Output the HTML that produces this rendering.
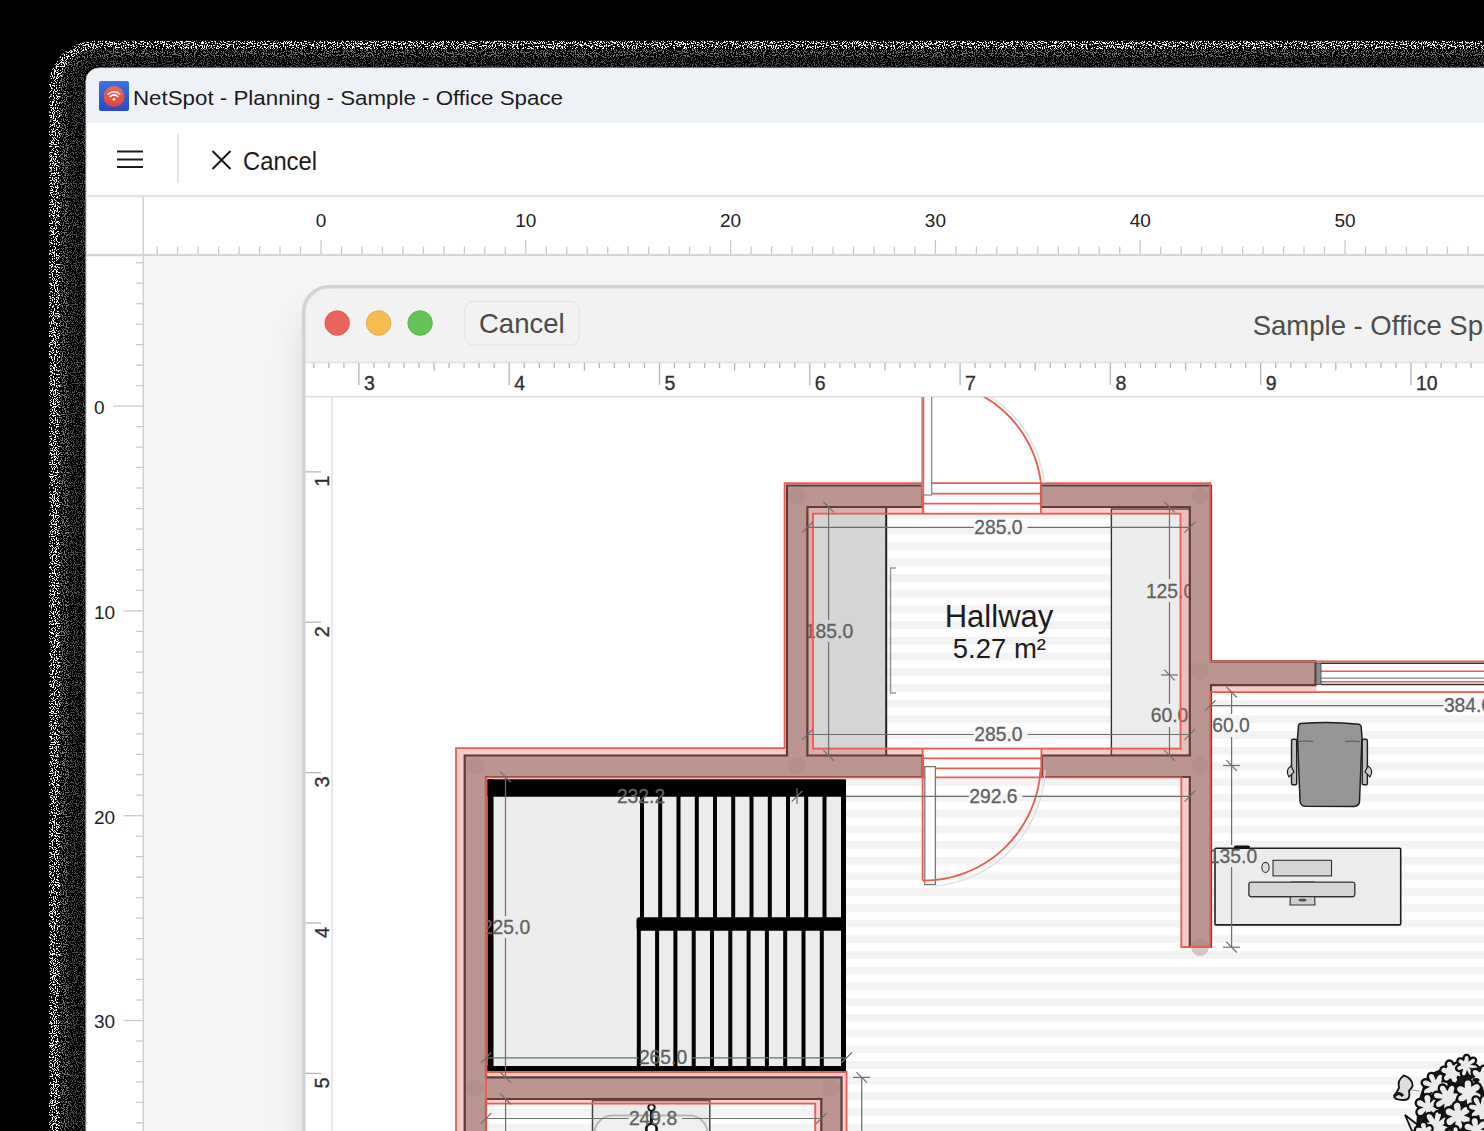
<!DOCTYPE html>
<html><head><meta charset="utf-8">
<style>
html,body{margin:0;padding:0;background:#000;width:1484px;height:1131px;overflow:hidden;}
svg{position:absolute;left:0;top:0;display:block;}
text{font-family:"Liberation Sans",sans-serif;}
</style></head><body>
<svg width="1484" height="1131" viewBox="0 0 1484 1131">
<defs>
<filter id="speck" x="0" y="0" width="1484" height="1131" filterUnits="userSpaceOnUse">
<feTurbulence type="fractalNoise" baseFrequency="0.9" numOctaves="1" seed="4" result="n"/>
<feColorMatrix in="n" type="matrix" values="0 0 0 0 1 0 0 0 0 1 0 0 0 0 1 30 0 0 0 -16" result="na"/>
<feComposite in="SourceGraphic" in2="na" operator="in"/>
</filter>
<filter id="blur2" x="-10%" y="-10%" width="120%" height="120%"><feGaussianBlur stdDeviation="1.5"/></filter>
<filter id="sh" x="-20%" y="-20%" width="140%" height="140%"><feGaussianBlur stdDeviation="22"/></filter>
<linearGradient id="icbg" x1="0" y1="0" x2="0" y2="1"><stop offset="0" stop-color="#3b74e0"/><stop offset="1" stop-color="#2a48c4"/></linearGradient>
<linearGradient id="icred" x1="0" y1="0" x2="0" y2="1"><stop offset="0" stop-color="#ec6a55"/><stop offset="1" stop-color="#d9473a"/></linearGradient>
<clipPath id="canvasclip"><rect x="144" y="255" width="1340" height="876"/></clipPath>
<clipPath id="innerclip"><path d="M329,285 H1490 V1140 H302 V312 A27,27 0 0 1 329,285 Z"/></clipPath>
<clipPath id="planclip"><rect x="333" y="397" width="1151" height="734"/></clipPath>
</defs>
<!-- noise shadow approx -->
<g filter="url(#speck)">
<rect x="49" y="40.7" width="1500" height="1200" rx="46" fill="#fff"/>
<rect x="60" y="49" width="1500" height="1200" rx="37" fill="#707070"/>
<rect x="69" y="57" width="1500" height="1200" rx="28" fill="#484848"/>
</g>
<!-- outer window -->
<rect x="86" y="68" width="1420" height="1100" rx="13" fill="#fff" stroke="#c6c6c6" stroke-width="1"/>
<path d="M99,68.5 H1490 V123 H86.5 V81 A12.5,12.5 0 0 1 99,68.5 Z" fill="#eef2f7"/>
<!-- app icon -->
<rect x="99" y="81" width="30" height="30" rx="2" fill="url(#icbg)"/>
<circle cx="114" cy="96.5" r="10.5" fill="url(#icred)"/>
<g fill="none" stroke="#fff" stroke-width="1.6" stroke-linecap="round">
<path d="M108.2,94.2 A8,8 0 0 1 119.8,94.2"/>
<path d="M110.3,96.5 A5,5 0 0 1 117.7,96.5"/>
</g>
<circle cx="114" cy="99.3" r="1.4" fill="#fff"/>
<text x="133" y="104.6" font-size="20.5" fill="#1b1b1b" textLength="430" lengthAdjust="spacingAndGlyphs">NetSpot - Planning - Sample - Office Space</text>
<!-- toolbar -->
<g stroke="#1b1b1b" stroke-width="2">
<line x1="117" y1="151.5" x2="143" y2="151.5"/>
<line x1="117" y1="159.5" x2="143" y2="159.5"/>
<line x1="117" y1="167" x2="143" y2="167"/>
</g>
<line x1="178" y1="134" x2="178" y2="183" stroke="#d4d4d4" stroke-width="1.2"/>
<g stroke="#1b1b1b" stroke-width="2"><line x1="212.5" y1="151" x2="230.5" y2="169"/><line x1="230.5" y1="151" x2="212.5" y2="169"/></g>
<text x="243" y="170" font-size="26" fill="#1b1b1b" textLength="74" lengthAdjust="spacingAndGlyphs">Cancel</text>
<rect x="86.5" y="195" width="1400" height="2.2" fill="#e3e3e3"/>
<!-- rulers -->
<rect x="142.6" y="197" width="1.4" height="940" fill="#d0d0d0"/>
<rect x="86.5" y="254.2" width="1400" height="2" fill="#d2d2d2"/>
<rect x="144" y="256.2" width="1340" height="876" fill="#f6f6f6"/>
<g stroke="#c9c9c9" stroke-width="1.3"><line x1="157.2" y1="246.5" x2="157.2" y2="254"/><line x1="177.6" y1="246.5" x2="177.6" y2="254"/><line x1="198.1" y1="246.5" x2="198.1" y2="254"/><line x1="218.6" y1="246.5" x2="218.6" y2="254"/><line x1="239.1" y1="246.5" x2="239.1" y2="254"/><line x1="259.6" y1="246.5" x2="259.6" y2="254"/><line x1="280.0" y1="246.5" x2="280.0" y2="254"/><line x1="300.5" y1="246.5" x2="300.5" y2="254"/><line x1="321.0" y1="240" x2="321.0" y2="254"/><line x1="341.5" y1="246.5" x2="341.5" y2="254"/><line x1="362.0" y1="246.5" x2="362.0" y2="254"/><line x1="382.4" y1="246.5" x2="382.4" y2="254"/><line x1="402.9" y1="246.5" x2="402.9" y2="254"/><line x1="423.4" y1="246.5" x2="423.4" y2="254"/><line x1="443.9" y1="246.5" x2="443.9" y2="254"/><line x1="464.4" y1="246.5" x2="464.4" y2="254"/><line x1="484.8" y1="246.5" x2="484.8" y2="254"/><line x1="505.3" y1="246.5" x2="505.3" y2="254"/><line x1="525.8" y1="240" x2="525.8" y2="254"/><line x1="546.3" y1="246.5" x2="546.3" y2="254"/><line x1="566.8" y1="246.5" x2="566.8" y2="254"/><line x1="587.2" y1="246.5" x2="587.2" y2="254"/><line x1="607.7" y1="246.5" x2="607.7" y2="254"/><line x1="628.2" y1="246.5" x2="628.2" y2="254"/><line x1="648.7" y1="246.5" x2="648.7" y2="254"/><line x1="669.2" y1="246.5" x2="669.2" y2="254"/><line x1="689.6" y1="246.5" x2="689.6" y2="254"/><line x1="710.1" y1="246.5" x2="710.1" y2="254"/><line x1="730.6" y1="240" x2="730.6" y2="254"/><line x1="751.1" y1="246.5" x2="751.1" y2="254"/><line x1="771.6" y1="246.5" x2="771.6" y2="254"/><line x1="792.0" y1="246.5" x2="792.0" y2="254"/><line x1="812.5" y1="246.5" x2="812.5" y2="254"/><line x1="833.0" y1="246.5" x2="833.0" y2="254"/><line x1="853.5" y1="246.5" x2="853.5" y2="254"/><line x1="874.0" y1="246.5" x2="874.0" y2="254"/><line x1="894.4" y1="246.5" x2="894.4" y2="254"/><line x1="914.9" y1="246.5" x2="914.9" y2="254"/><line x1="935.4" y1="240" x2="935.4" y2="254"/><line x1="955.9" y1="246.5" x2="955.9" y2="254"/><line x1="976.4" y1="246.5" x2="976.4" y2="254"/><line x1="996.8" y1="246.5" x2="996.8" y2="254"/><line x1="1017.3" y1="246.5" x2="1017.3" y2="254"/><line x1="1037.8" y1="246.5" x2="1037.8" y2="254"/><line x1="1058.3" y1="246.5" x2="1058.3" y2="254"/><line x1="1078.8" y1="246.5" x2="1078.8" y2="254"/><line x1="1099.2" y1="246.5" x2="1099.2" y2="254"/><line x1="1119.7" y1="246.5" x2="1119.7" y2="254"/><line x1="1140.2" y1="240" x2="1140.2" y2="254"/><line x1="1160.7" y1="246.5" x2="1160.7" y2="254"/><line x1="1181.2" y1="246.5" x2="1181.2" y2="254"/><line x1="1201.6" y1="246.5" x2="1201.6" y2="254"/><line x1="1222.1" y1="246.5" x2="1222.1" y2="254"/><line x1="1242.6" y1="246.5" x2="1242.6" y2="254"/><line x1="1263.1" y1="246.5" x2="1263.1" y2="254"/><line x1="1283.6" y1="246.5" x2="1283.6" y2="254"/><line x1="1304.0" y1="246.5" x2="1304.0" y2="254"/><line x1="1324.5" y1="246.5" x2="1324.5" y2="254"/><line x1="1345.0" y1="240" x2="1345.0" y2="254"/><line x1="1365.5" y1="246.5" x2="1365.5" y2="254"/><line x1="1386.0" y1="246.5" x2="1386.0" y2="254"/><line x1="1406.4" y1="246.5" x2="1406.4" y2="254"/><line x1="1426.9" y1="246.5" x2="1426.9" y2="254"/><line x1="1447.4" y1="246.5" x2="1447.4" y2="254"/><line x1="1467.9" y1="246.5" x2="1467.9" y2="254"/><line x1="1488.4" y1="246.5" x2="1488.4" y2="254"/><line x1="136" y1="262.7" x2="143" y2="262.7"/><line x1="136" y1="283.2" x2="143" y2="283.2"/><line x1="136" y1="303.7" x2="143" y2="303.7"/><line x1="136" y1="324.2" x2="143" y2="324.2"/><line x1="136" y1="344.7" x2="143" y2="344.7"/><line x1="136" y1="365.1" x2="143" y2="365.1"/><line x1="136" y1="385.6" x2="143" y2="385.6"/><line x1="113" y1="406.1" x2="143" y2="406.1"/><line x1="136" y1="426.6" x2="143" y2="426.6"/><line x1="136" y1="447.1" x2="143" y2="447.1"/><line x1="136" y1="467.5" x2="143" y2="467.5"/><line x1="136" y1="488.0" x2="143" y2="488.0"/><line x1="136" y1="508.5" x2="143" y2="508.5"/><line x1="136" y1="529.0" x2="143" y2="529.0"/><line x1="136" y1="549.5" x2="143" y2="549.5"/><line x1="136" y1="569.9" x2="143" y2="569.9"/><line x1="136" y1="590.4" x2="143" y2="590.4"/><line x1="123.5" y1="610.9" x2="143" y2="610.9"/><line x1="136" y1="631.4" x2="143" y2="631.4"/><line x1="136" y1="651.9" x2="143" y2="651.9"/><line x1="136" y1="672.3" x2="143" y2="672.3"/><line x1="136" y1="692.8" x2="143" y2="692.8"/><line x1="136" y1="713.3" x2="143" y2="713.3"/><line x1="136" y1="733.8" x2="143" y2="733.8"/><line x1="136" y1="754.3" x2="143" y2="754.3"/><line x1="136" y1="774.7" x2="143" y2="774.7"/><line x1="136" y1="795.2" x2="143" y2="795.2"/><line x1="123.5" y1="815.7" x2="143" y2="815.7"/><line x1="136" y1="836.2" x2="143" y2="836.2"/><line x1="136" y1="856.7" x2="143" y2="856.7"/><line x1="136" y1="877.1" x2="143" y2="877.1"/><line x1="136" y1="897.6" x2="143" y2="897.6"/><line x1="136" y1="918.1" x2="143" y2="918.1"/><line x1="136" y1="938.6" x2="143" y2="938.6"/><line x1="136" y1="959.1" x2="143" y2="959.1"/><line x1="136" y1="979.5" x2="143" y2="979.5"/><line x1="136" y1="1000.0" x2="143" y2="1000.0"/><line x1="123.5" y1="1020.5" x2="143" y2="1020.5"/><line x1="136" y1="1041.0" x2="143" y2="1041.0"/><line x1="136" y1="1061.5" x2="143" y2="1061.5"/><line x1="136" y1="1081.9" x2="143" y2="1081.9"/><line x1="136" y1="1102.4" x2="143" y2="1102.4"/><line x1="136" y1="1122.9" x2="143" y2="1122.9"/></g>
<g font-size="19" fill="#222"><text x="321.0" y="227.3" text-anchor="middle">0</text><text x="525.8" y="227.3" text-anchor="middle">10</text><text x="730.6" y="227.3" text-anchor="middle">20</text><text x="935.4" y="227.3" text-anchor="middle">30</text><text x="1140.2" y="227.3" text-anchor="middle">40</text><text x="1345.0" y="227.3" text-anchor="middle">50</text><text x="1549.8" y="227.3" text-anchor="middle">60</text><text x="94" y="413.9">0</text><text x="94" y="618.7">10</text><text x="94" y="823.5">20</text><text x="94" y="1028.3">30</text><text x="94" y="1233.1">40</text></g>
<!-- inner window shadow -->
<g clip-path="url(#canvasclip)">
<rect x="300" y="310" width="1300" height="1000" rx="26" fill="#000" opacity="0.09" filter="url(#sh)"/>
</g>
<!-- inner window -->
<path d="M329,285 H1490 V1140 H302 V312 A27,27 0 0 1 329,285 Z" fill="#f2f2f2"/>
<g clip-path="url(#innerclip)">
<rect x="300" y="362" width="1200" height="800" fill="#fff"/>
<rect x="300" y="396" width="1200" height="1.5" fill="#e0e0e0"/>
<rect x="300" y="361.6" width="1200" height="1.8" fill="#e4e4e4"/>
<rect x="331.2" y="397" width="1.6" height="760" fill="#e3e3e3"/>
<g stroke="#b5b5b5" stroke-width="1.3"><line x1="313.8" y1="363" x2="313.8" y2="368"/><line x1="328.8" y1="363" x2="328.8" y2="368"/><line x1="343.9" y1="363" x2="343.9" y2="368"/><line x1="358.9" y1="363" x2="358.9" y2="385"/><line x1="373.9" y1="363" x2="373.9" y2="368"/><line x1="389.0" y1="363" x2="389.0" y2="368"/><line x1="404.0" y1="363" x2="404.0" y2="368"/><line x1="419.0" y1="363" x2="419.0" y2="368"/><line x1="434.0" y1="363" x2="434.0" y2="370.5"/><line x1="449.1" y1="363" x2="449.1" y2="368"/><line x1="464.1" y1="363" x2="464.1" y2="368"/><line x1="479.1" y1="363" x2="479.1" y2="368"/><line x1="494.2" y1="363" x2="494.2" y2="368"/><line x1="509.2" y1="363" x2="509.2" y2="385"/><line x1="524.2" y1="363" x2="524.2" y2="368"/><line x1="539.3" y1="363" x2="539.3" y2="368"/><line x1="554.3" y1="363" x2="554.3" y2="368"/><line x1="569.3" y1="363" x2="569.3" y2="368"/><line x1="584.4" y1="363" x2="584.4" y2="370.5"/><line x1="599.4" y1="363" x2="599.4" y2="368"/><line x1="614.4" y1="363" x2="614.4" y2="368"/><line x1="629.4" y1="363" x2="629.4" y2="368"/><line x1="644.5" y1="363" x2="644.5" y2="368"/><line x1="659.5" y1="363" x2="659.5" y2="385"/><line x1="674.5" y1="363" x2="674.5" y2="368"/><line x1="689.6" y1="363" x2="689.6" y2="368"/><line x1="704.6" y1="363" x2="704.6" y2="368"/><line x1="719.6" y1="363" x2="719.6" y2="368"/><line x1="734.6" y1="363" x2="734.6" y2="370.5"/><line x1="749.7" y1="363" x2="749.7" y2="368"/><line x1="764.7" y1="363" x2="764.7" y2="368"/><line x1="779.7" y1="363" x2="779.7" y2="368"/><line x1="794.8" y1="363" x2="794.8" y2="368"/><line x1="809.8" y1="363" x2="809.8" y2="385"/><line x1="824.8" y1="363" x2="824.8" y2="368"/><line x1="839.9" y1="363" x2="839.9" y2="368"/><line x1="854.9" y1="363" x2="854.9" y2="368"/><line x1="869.9" y1="363" x2="869.9" y2="368"/><line x1="885.0" y1="363" x2="885.0" y2="370.5"/><line x1="900.0" y1="363" x2="900.0" y2="368"/><line x1="915.0" y1="363" x2="915.0" y2="368"/><line x1="930.0" y1="363" x2="930.0" y2="368"/><line x1="945.1" y1="363" x2="945.1" y2="368"/><line x1="960.1" y1="363" x2="960.1" y2="385"/><line x1="975.1" y1="363" x2="975.1" y2="368"/><line x1="990.2" y1="363" x2="990.2" y2="368"/><line x1="1005.2" y1="363" x2="1005.2" y2="368"/><line x1="1020.2" y1="363" x2="1020.2" y2="368"/><line x1="1035.2" y1="363" x2="1035.2" y2="370.5"/><line x1="1050.3" y1="363" x2="1050.3" y2="368"/><line x1="1065.3" y1="363" x2="1065.3" y2="368"/><line x1="1080.3" y1="363" x2="1080.3" y2="368"/><line x1="1095.4" y1="363" x2="1095.4" y2="368"/><line x1="1110.4" y1="363" x2="1110.4" y2="385"/><line x1="1125.4" y1="363" x2="1125.4" y2="368"/><line x1="1140.5" y1="363" x2="1140.5" y2="368"/><line x1="1155.5" y1="363" x2="1155.5" y2="368"/><line x1="1170.5" y1="363" x2="1170.5" y2="368"/><line x1="1185.6" y1="363" x2="1185.6" y2="370.5"/><line x1="1200.6" y1="363" x2="1200.6" y2="368"/><line x1="1215.6" y1="363" x2="1215.6" y2="368"/><line x1="1230.6" y1="363" x2="1230.6" y2="368"/><line x1="1245.7" y1="363" x2="1245.7" y2="368"/><line x1="1260.7" y1="363" x2="1260.7" y2="385"/><line x1="1275.7" y1="363" x2="1275.7" y2="368"/><line x1="1290.8" y1="363" x2="1290.8" y2="368"/><line x1="1305.8" y1="363" x2="1305.8" y2="368"/><line x1="1320.8" y1="363" x2="1320.8" y2="368"/><line x1="1335.8" y1="363" x2="1335.8" y2="370.5"/><line x1="1350.9" y1="363" x2="1350.9" y2="368"/><line x1="1365.9" y1="363" x2="1365.9" y2="368"/><line x1="1380.9" y1="363" x2="1380.9" y2="368"/><line x1="1396.0" y1="363" x2="1396.0" y2="368"/><line x1="1411.0" y1="363" x2="1411.0" y2="385"/><line x1="1426.0" y1="363" x2="1426.0" y2="368"/><line x1="1441.1" y1="363" x2="1441.1" y2="368"/><line x1="1456.1" y1="363" x2="1456.1" y2="368"/><line x1="1471.1" y1="363" x2="1471.1" y2="368"/><line x1="1486.2" y1="363" x2="1486.2" y2="370.5"/><line x1="305" y1="471.8" x2="321" y2="471.8"/><line x1="305" y1="622.2" x2="321" y2="622.2"/><line x1="305" y1="772.6" x2="321" y2="772.6"/><line x1="305" y1="923.0" x2="321" y2="923.0"/><line x1="305" y1="1073.4" x2="321" y2="1073.4"/></g>
<g font-size="19.5" fill="#2e2e2e" stroke="#2e2e2e" stroke-width="0.3"><text x="363.9" y="389.5">3</text><text x="514.2" y="389.5">4</text><text x="664.5" y="389.5">5</text><text x="814.8" y="389.5">6</text><text x="965.1" y="389.5">7</text><text x="1115.4" y="389.5">8</text><text x="1265.7" y="389.5">9</text><text x="1416.0" y="389.5">10</text><text x="1566.3" y="389.5">11</text><text transform="translate(328.6,486.8) rotate(-90)" x="0" y="0" font-size="20">1</text><text transform="translate(328.6,637.2) rotate(-90)" x="0" y="0" font-size="20">2</text><text transform="translate(328.6,787.6) rotate(-90)" x="0" y="0" font-size="20">3</text><text transform="translate(328.6,938.0) rotate(-90)" x="0" y="0" font-size="20">4</text><text transform="translate(328.6,1088.4) rotate(-90)" x="0" y="0" font-size="20">5</text></g>
</g>
<path d="M1490,286.75 H329 A25.25,25.25 0 0 0 303.75,312 V1140" fill="none" stroke="#d3d3d3" stroke-width="3.7"/>
<!-- traffic lights -->
<circle cx="337.2" cy="323" r="12.3" fill="#ec6559" stroke="#d5493f" stroke-width="0.7"/>
<circle cx="378.6" cy="323" r="12.3" fill="#f4bd4f" stroke="#d8a13a" stroke-width="0.7"/>
<circle cx="420.1" cy="323" r="12.3" fill="#61c454" stroke="#4fa83f" stroke-width="0.7"/>
<rect x="464.8" y="301.3" width="114.3" height="43.5" rx="8" fill="#f2f2f2" stroke="#e1e1e1" stroke-width="1"/>
<text x="521.8" y="332.5" font-size="27.5" fill="#4a4a4a" text-anchor="middle">Cancel</text>
<text x="1252.7" y="334.9" font-size="27.5" fill="#4d4d4d">Sample - Office Space</text>
<g clip-path="url(#planclip)">
<defs><pattern id="stripes" patternUnits="userSpaceOnUse" x="0" y="8.46" width="40" height="15.71">
<rect x="0" y="0" width="40" height="15.71" fill="#fff"/><rect x="0" y="0" width="40" height="7.7" fill="#f3f3f3"/></pattern>
<pattern id="stripes2" patternUnits="userSpaceOnUse" x="0" y="8.46" width="40" height="15.71">
<rect x="0" y="0" width="40" height="15.71" fill="#fff"/><rect x="0" y="0" width="40" height="7.7" fill="#f0f0f0"/></pattern>
</defs>
<path d="M813,513.7 H1180.5 V748.6 H813 Z" fill="url(#stripes)"/>
<path d="M486,777 H1181.3 V947 H1210.2 V692.2 H1490 V1140 H846.6 V1072 H486 Z" fill="url(#stripes)"/>
<path d="M486,1103.7 H815.2 V1140 H486 Z" fill="url(#stripes)"/>
<rect x="922.6" y="483.2" width="118.4" height="30.5" fill="#fff"/>
<rect x="922.6" y="748.8" width="118.8" height="28.2" fill="#fff"/>
<rect x="807.4" y="507" width="78.8" height="248.5" fill="#d5d5d5"/>
<rect x="1111.4" y="509" width="78.4" height="246.5" fill="#ececec" stroke="#333" stroke-width="1.4"/>
<line x1="886.2" y1="507" x2="886.2" y2="755.5" stroke="#222" stroke-width="2"/>
<path d="M896,568 H890.5 V693 H896" fill="none" stroke="#999" stroke-width="1.5"/>
<rect x="486" y="777" width="360" height="295" fill="#ececec"/>
<rect x="592.5" y="1100.6" width="117.3" height="40" fill="#ebebeb" stroke="#444" stroke-width="1.5"/>
<rect x="594.5" y="1115.5" width="113" height="40" rx="18" fill="#efefef" stroke="#b5b5b5" stroke-width="1.8"/>
<g fill="#000"><rect x="487.5" y="779.3" width="358.5" height="17.5" rx="1"/><rect x="636.5" y="917.3" width="209.5" height="13.5" rx="3"/><rect x="487.5" y="1066" width="358.5" height="5.5"/><rect x="487.5" y="779.3" width="6" height="292"/><rect x="841" y="781" width="5" height="290"/><rect x="640.0" y="795" width="4" height="124"/><rect x="636.8" y="929" width="4" height="139"/><rect x="658.2" y="795" width="4" height="124"/><rect x="655.1" y="929" width="4" height="139"/><rect x="676.5" y="795" width="4" height="124"/><rect x="673.4" y="929" width="4" height="139"/><rect x="694.8" y="795" width="4" height="124"/><rect x="691.7" y="929" width="4" height="139"/><rect x="713.0" y="795" width="4" height="124"/><rect x="710.0" y="929" width="4" height="139"/><rect x="731.2" y="795" width="4" height="124"/><rect x="728.3" y="929" width="4" height="139"/><rect x="749.5" y="795" width="4" height="124"/><rect x="746.6" y="929" width="4" height="139"/><rect x="767.8" y="795" width="4" height="124"/><rect x="764.9" y="929" width="4" height="139"/><rect x="786.0" y="795" width="4" height="124"/><rect x="783.2" y="929" width="4" height="139"/><rect x="804.2" y="795" width="4" height="124"/><rect x="801.5" y="929" width="4" height="139"/><rect x="822.5" y="795" width="4" height="124"/><rect x="819.8" y="929" width="4" height="139"/></g>
<g fill="#fff" stroke="#111" stroke-width="2"><circle cx="651.5" cy="1107.5" r="3.2"/><line x1="651.5" y1="1111" x2="651.5" y2="1123" stroke-width="3"/><circle cx="651.5" cy="1129" r="5.2" stroke-width="2.6"/></g>
<rect x="1215" y="848.3" width="185.7" height="76.6" fill="#ececec" stroke="#1e1e1e" stroke-width="1.6" rx="1"/>
<rect x="1234" y="845.5" width="16" height="3.2" rx="1.5" fill="#111"/>
<rect x="1273" y="860.3" width="58.5" height="15.6" fill="#d6d6d6" stroke="#333" stroke-width="1.1"/>
<rect x="1249" y="882.3" width="105.7" height="14.3" rx="2" fill="#d6d6d6" stroke="#333" stroke-width="1.1"/>
<path d="M1291,882 H1314 L1315,905 H1290 Z" fill="#d0d0d0" stroke="#333" stroke-width="1.1"/>
<rect x="1249" y="882.3" width="105.7" height="14.3" rx="2" fill="#d6d6d6" stroke="#333" stroke-width="1.1"/>
<ellipse cx="1302.5" cy="900" rx="4" ry="1.5" fill="#555"/>
<ellipse cx="1265.5" cy="867.4" rx="3.6" ry="5" fill="#ddd" stroke="#333" stroke-width="1.1"/>
<path d="M1298.5,726 Q1298.5,723.8 1301,723.5 Q1330,721 1359,724.2 Q1361,724.6 1361.2,727 L1362,738 L1359.5,802 Q1358.8,806 1354,806.5 L1305,806.3 Q1300.5,806 1300,801 L1297.5,738 Z" fill="#969696" stroke="#1e1e1e" stroke-width="1.5"/>
<rect x="1291.5" y="739.2" width="5.2" height="45.5" rx="1.5" fill="#bdbdbd" stroke="#1e1e1e" stroke-width="1.4"/>
<rect x="1362.2" y="739.2" width="5.2" height="45.5" rx="1.5" fill="#bdbdbd" stroke="#1e1e1e" stroke-width="1.4"/>
<path d="M1298,741.5 Q1306,740.5 1313,741.5 M1345,741.5 Q1352,740.5 1360,741.5" fill="none" stroke="#555" stroke-width="1"/>
<path d="M1291,766 Q1285,770 1289,777 L1294,772 Z M1368,766 Q1374,770 1370,777 L1365,772 Z" fill="#cfcfcf" stroke="#1e1e1e" stroke-width="1.1"/>
<path d="M1403.8,1075.4 Q1413,1079 1412.6,1086 Q1411,1089 1409,1091 Q1411,1100 1404,1100 Q1394,1100 1394,1096 Q1397,1092 1399,1088 Q1397,1080 1403.8,1075.4 Z" fill="#dedede" stroke="#111" stroke-width="1.8"/>
<path d="M1394.5,1096 Q1399,1091 1403,1096" fill="none" stroke="#111" stroke-width="3"/>
<line x1="1412" y1="1090" x2="1420" y2="1091" stroke="#999" stroke-width="1"/>
<path d="M1405,1115 L1418,1125 L1420,1131 L1412,1131 Z" fill="#e5e5e5" stroke="#111" stroke-width="1.8"/>
<path d="M1416,1140 L1419,1102 L1425,1084 L1434,1073 L1455.6,1064 L1465.3,1057.5 L1473.5,1066.5 L1490,1068 V1140 Z" fill="#1a1a1a" stroke="#111" stroke-width="2"/>
<path d="M1448.5,1086.0 L1447.9,1086.9 L1447.0,1087.7 L1445.8,1088.3 L1444.1,1088.6 L1443.8,1089.2 L1445.0,1090.5 L1445.6,1091.7 L1445.9,1092.8 L1445.9,1093.9 L1445.5,1094.8 L1445.0,1095.6 L1444.2,1096.2 L1443.2,1096.6 L1442.2,1096.6 L1441.0,1096.4 L1439.8,1095.8 L1438.4,1094.5 L1438.0,1095.1 L1437.7,1096.8 L1437.1,1098.0 L1436.4,1098.9 L1435.5,1099.5 L1434.5,1099.8 L1433.6,1099.8 L1432.6,1099.5 L1431.8,1098.9 L1431.1,1098.1 L1430.6,1097.0 L1430.3,1095.6 L1430.6,1093.6 L1429.5,1094.2 L1428.0,1094.9 L1426.8,1095.2 L1425.6,1095.1 L1424.6,1094.7 L1423.8,1094.1 L1423.3,1093.3 L1422.9,1092.4 L1422.9,1091.4 L1423.2,1090.3 L1423.8,1089.2 L1424.8,1088.2 L1426.8,1087.2 L1424.9,1086.7 L1423.5,1086.0 L1422.6,1085.1 L1422.0,1084.2 L1421.7,1083.2 L1421.7,1082.2 L1422.0,1081.3 L1422.6,1080.5 L1423.4,1079.8 L1424.4,1079.4 L1425.7,1079.2 L1427.2,1079.4 L1429.2,1080.4 L1428.1,1078.3 L1427.8,1076.8 L1428.0,1075.6 L1428.4,1074.6 L1429.0,1073.7 L1429.8,1073.2 L1430.7,1072.9 L1431.7,1072.8 L1432.7,1073.1 L1433.7,1073.7 L1434.6,1074.6 L1435.3,1076.0 L1435.9,1077.5 L1436.8,1075.6 L1437.8,1074.6 L1438.9,1074.0 L1440.0,1073.7 L1441.0,1073.7 L1441.9,1074.0 L1442.7,1074.6 L1443.3,1075.3 L1443.7,1076.3 L1443.8,1077.5 L1443.6,1078.8 L1442.9,1080.3 L1442.6,1081.2 L1444.5,1080.9 L1445.9,1081.2 L1447.0,1081.6 L1447.8,1082.3 L1448.4,1083.1 L1448.7,1084.1 L1448.7,1085.0 Z" fill="#ebebeb" stroke="#111" stroke-width="2.3"/>
<path d="M1463.3,1072.0 L1463.6,1072.8 L1463.7,1073.6 L1463.6,1074.5 L1463.3,1075.3 L1462.9,1076.0 L1462.3,1076.6 L1461.5,1077.0 L1460.5,1077.3 L1459.4,1077.4 L1458.0,1077.1 L1457.7,1077.5 L1458.2,1078.8 L1458.2,1079.9 L1458.0,1080.9 L1457.6,1081.7 L1457.1,1082.4 L1456.4,1083.0 L1455.7,1083.3 L1454.9,1083.5 L1454.0,1083.4 L1453.2,1083.2 L1452.4,1082.7 L1451.6,1082.0 L1451.0,1081.1 L1450.6,1079.8 L1450.1,1079.7 L1449.2,1080.7 L1448.2,1081.3 L1447.3,1081.7 L1446.4,1081.7 L1445.5,1081.6 L1444.7,1081.3 L1444.1,1080.8 L1443.5,1080.2 L1443.1,1079.5 L1442.9,1078.6 L1442.9,1077.7 L1443.1,1076.7 L1443.6,1075.7 L1444.6,1074.7 L1444.4,1074.2 L1443.0,1073.9 L1442.0,1073.4 L1441.3,1072.7 L1440.7,1072.0 L1440.4,1071.2 L1440.3,1070.4 L1440.4,1069.5 L1440.7,1068.7 L1441.1,1068.0 L1441.7,1067.4 L1442.5,1067.0 L1443.5,1066.7 L1444.6,1066.6 L1446.0,1066.9 L1446.3,1066.5 L1445.8,1065.2 L1445.8,1064.1 L1446.0,1063.1 L1446.4,1062.3 L1446.9,1061.6 L1447.6,1061.0 L1448.3,1060.7 L1449.1,1060.5 L1450.0,1060.6 L1450.8,1060.8 L1451.6,1061.3 L1452.4,1062.0 L1453.0,1062.9 L1453.4,1064.2 L1453.9,1064.3 L1454.8,1063.3 L1455.8,1062.7 L1456.7,1062.3 L1457.6,1062.3 L1458.5,1062.4 L1459.3,1062.7 L1459.9,1063.2 L1460.5,1063.8 L1460.9,1064.5 L1461.1,1065.4 L1461.1,1066.3 L1460.9,1067.3 L1460.4,1068.3 L1459.4,1069.3 L1459.6,1069.8 L1461.0,1070.1 L1462.0,1070.6 L1462.7,1071.3 Z" fill="#ebebeb" stroke="#111" stroke-width="2.3"/>
<path d="M1477.6,1066.0 L1478.0,1066.8 L1478.1,1067.6 L1478.0,1068.3 L1477.6,1069.0 L1477.0,1069.7 L1476.3,1070.1 L1475.3,1070.4 L1474.0,1070.4 L1472.1,1069.7 L1473.4,1071.4 L1473.8,1072.5 L1473.8,1073.5 L1473.6,1074.4 L1473.2,1075.2 L1472.6,1075.7 L1471.9,1076.1 L1471.1,1076.2 L1470.3,1076.1 L1469.4,1075.7 L1468.6,1075.1 L1467.8,1074.1 L1467.2,1072.9 L1466.7,1074.5 L1466.0,1075.5 L1465.2,1076.1 L1464.4,1076.4 L1463.6,1076.5 L1462.8,1076.4 L1462.1,1076.0 L1461.5,1075.5 L1461.1,1074.7 L1460.9,1073.8 L1460.9,1072.8 L1461.3,1071.5 L1461.5,1070.6 L1460.0,1071.1 L1458.8,1071.1 L1457.9,1070.8 L1457.1,1070.4 L1456.6,1069.8 L1456.2,1069.1 L1456.1,1068.3 L1456.2,1067.5 L1456.6,1066.7 L1457.2,1066.0 L1458.1,1065.4 L1459.4,1064.9 L1459.7,1064.4 L1458.5,1063.6 L1457.8,1062.7 L1457.5,1061.8 L1457.4,1060.9 L1457.6,1060.1 L1457.9,1059.4 L1458.5,1058.8 L1459.2,1058.5 L1460.0,1058.3 L1461.0,1058.3 L1462.1,1058.7 L1463.3,1059.6 L1463.6,1059.0 L1463.6,1057.7 L1464.0,1056.6 L1464.5,1055.8 L1465.1,1055.3 L1465.8,1054.9 L1466.6,1054.8 L1467.4,1054.9 L1468.1,1055.3 L1468.8,1055.9 L1469.3,1056.7 L1469.7,1057.8 L1469.7,1059.4 L1470.5,1058.8 L1471.6,1058.1 L1472.6,1057.7 L1473.5,1057.7 L1474.3,1057.9 L1475.0,1058.2 L1475.6,1058.8 L1476.0,1059.5 L1476.1,1060.3 L1476.0,1061.2 L1475.7,1062.1 L1475.0,1063.1 L1473.5,1064.1 L1475.0,1064.3 L1476.2,1064.7 L1477.0,1065.3 Z" fill="#ebebeb" stroke="#111" stroke-width="2.3"/>
<path d="M1495.0,1080.0 L1496.0,1080.9 L1496.6,1081.9 L1496.9,1083.0 L1496.9,1084.0 L1496.6,1085.0 L1496.0,1085.8 L1495.2,1086.5 L1494.1,1087.0 L1492.8,1087.1 L1491.2,1086.9 L1488.8,1085.6 L1490.2,1088.0 L1490.5,1089.6 L1490.3,1090.9 L1489.9,1092.0 L1489.3,1092.8 L1488.4,1093.4 L1487.5,1093.8 L1486.4,1093.8 L1485.4,1093.5 L1484.4,1092.9 L1483.4,1092.0 L1482.6,1090.5 L1482.1,1088.8 L1481.1,1090.8 L1480.0,1091.9 L1478.9,1092.6 L1477.8,1092.9 L1476.7,1092.9 L1475.7,1092.6 L1474.9,1092.0 L1474.3,1091.2 L1473.9,1090.1 L1473.7,1088.9 L1474.0,1087.6 L1474.7,1086.0 L1475.1,1084.9 L1473.1,1085.3 L1471.6,1085.1 L1470.5,1084.6 L1469.6,1083.9 L1468.9,1083.0 L1468.6,1082.0 L1468.6,1081.0 L1468.9,1080.0 L1469.5,1079.1 L1470.4,1078.2 L1471.6,1077.6 L1473.4,1077.2 L1473.9,1076.7 L1472.6,1075.4 L1471.9,1074.1 L1471.6,1072.9 L1471.6,1071.7 L1472.0,1070.7 L1472.6,1069.9 L1473.4,1069.3 L1474.4,1068.9 L1475.5,1068.8 L1476.7,1069.1 L1478.0,1069.7 L1479.4,1071.0 L1479.9,1070.5 L1480.2,1068.7 L1480.8,1067.5 L1481.6,1066.5 L1482.5,1065.9 L1483.5,1065.6 L1484.5,1065.6 L1485.5,1065.9 L1486.4,1066.4 L1487.1,1067.3 L1487.7,1068.5 L1487.9,1069.9 L1487.6,1071.9 L1488.7,1071.5 L1490.3,1070.7 L1491.6,1070.4 L1492.8,1070.5 L1493.9,1070.9 L1494.7,1071.5 L1495.3,1072.3 L1495.6,1073.3 L1495.7,1074.3 L1495.4,1075.5 L1494.8,1076.6 L1493.8,1077.7 L1491.8,1078.8 L1493.5,1079.3 Z" fill="#ebebeb" stroke="#111" stroke-width="2.3"/>
<path d="M1437.7,1107.0 L1438.8,1107.8 L1439.5,1108.6 L1440.0,1109.6 L1440.2,1110.5 L1440.3,1111.5 L1440.0,1112.4 L1439.6,1113.2 L1439.0,1113.9 L1438.3,1114.5 L1437.3,1114.8 L1436.3,1115.0 L1435.1,1114.9 L1433.8,1114.5 L1432.3,1113.4 L1432.8,1115.4 L1432.7,1116.7 L1432.4,1117.8 L1431.8,1118.7 L1431.1,1119.4 L1430.3,1119.8 L1429.4,1120.1 L1428.5,1120.2 L1427.5,1120.0 L1426.7,1119.6 L1425.9,1119.0 L1425.2,1118.2 L1424.7,1117.1 L1424.4,1115.8 L1424.6,1113.9 L1423.2,1115.4 L1422.0,1115.9 L1420.8,1116.2 L1419.8,1116.1 L1418.8,1115.8 L1418.0,1115.4 L1417.3,1114.8 L1416.8,1114.0 L1416.5,1113.1 L1416.4,1112.2 L1416.5,1111.2 L1416.9,1110.2 L1417.6,1109.2 L1418.6,1108.3 L1420.3,1107.5 L1418.3,1107.0 L1417.2,1106.2 L1416.5,1105.4 L1416.0,1104.4 L1415.8,1103.5 L1415.7,1102.5 L1416.0,1101.6 L1416.4,1100.8 L1417.0,1100.1 L1417.7,1099.5 L1418.7,1099.2 L1419.7,1099.0 L1420.9,1099.1 L1422.2,1099.5 L1423.7,1100.6 L1423.2,1098.6 L1423.3,1097.3 L1423.6,1096.2 L1424.2,1095.3 L1424.9,1094.6 L1425.7,1094.2 L1426.6,1093.9 L1427.5,1093.8 L1428.5,1094.0 L1429.3,1094.4 L1430.1,1095.0 L1430.8,1095.8 L1431.3,1096.9 L1431.6,1098.2 L1431.4,1100.1 L1432.8,1098.6 L1434.0,1098.1 L1435.2,1097.8 L1436.2,1097.9 L1437.2,1098.2 L1438.0,1098.6 L1438.7,1099.2 L1439.2,1100.0 L1439.5,1100.9 L1439.6,1101.8 L1439.5,1102.8 L1439.1,1103.8 L1438.4,1104.8 L1437.4,1105.7 L1435.7,1106.5 Z" fill="#ebebeb" stroke="#111" stroke-width="2.3"/>
<path d="M1460.5,1098.0 L1459.6,1098.9 L1458.3,1099.6 L1456.5,1100.0 L1456.5,1100.7 L1457.9,1102.0 L1458.6,1103.2 L1458.9,1104.4 L1459.0,1105.5 L1458.7,1106.5 L1458.1,1107.3 L1457.3,1108.0 L1456.4,1108.4 L1455.2,1108.5 L1454.0,1108.3 L1452.6,1107.8 L1451.1,1106.4 L1450.8,1107.5 L1450.6,1109.2 L1450.1,1110.5 L1449.4,1111.4 L1448.5,1112.1 L1447.5,1112.4 L1446.5,1112.5 L1445.5,1112.3 L1444.6,1111.7 L1443.8,1110.9 L1443.2,1109.7 L1442.9,1108.2 L1443.1,1106.1 L1441.8,1107.1 L1440.3,1107.9 L1439.0,1108.2 L1437.8,1108.2 L1436.8,1107.9 L1435.9,1107.3 L1435.3,1106.5 L1434.9,1105.6 L1434.8,1104.5 L1435.0,1103.3 L1435.6,1102.2 L1436.6,1101.0 L1438.9,1099.7 L1436.4,1099.5 L1434.9,1098.8 L1433.9,1098.0 L1433.2,1097.0 L1432.9,1096.0 L1432.8,1095.0 L1433.1,1094.0 L1433.6,1093.1 L1434.4,1092.4 L1435.5,1091.9 L1436.8,1091.6 L1438.4,1091.8 L1440.3,1092.4 L1439.1,1090.4 L1438.8,1088.9 L1438.9,1087.6 L1439.2,1086.5 L1439.8,1085.6 L1440.6,1085.0 L1441.6,1084.6 L1442.6,1084.5 L1443.7,1084.7 L1444.8,1085.3 L1445.8,1086.2 L1446.6,1087.7 L1447.3,1088.8 L1448.2,1086.9 L1449.2,1085.8 L1450.2,1085.1 L1451.3,1084.7 L1452.4,1084.7 L1453.4,1085.0 L1454.2,1085.5 L1454.9,1086.3 L1455.4,1087.3 L1455.5,1088.5 L1455.4,1089.9 L1454.7,1091.5 L1454.8,1092.4 L1456.6,1092.0 L1458.1,1092.1 L1459.3,1092.5 L1460.2,1093.2 L1460.8,1094.0 L1461.2,1095.0 L1461.3,1096.0 L1461.0,1097.0 Z" fill="#ebebeb" stroke="#111" stroke-width="2.3"/>
<path d="M1480.0,1093.0 L1480.9,1093.8 L1481.6,1094.8 L1481.9,1095.8 L1482.1,1096.8 L1482.0,1097.7 L1481.7,1098.6 L1481.1,1099.4 L1480.4,1100.1 L1479.5,1100.6 L1478.5,1100.9 L1477.3,1101.0 L1476.0,1100.7 L1474.4,1099.9 L1474.4,1101.0 L1474.5,1102.5 L1474.2,1103.7 L1473.8,1104.8 L1473.1,1105.6 L1472.3,1106.2 L1471.4,1106.6 L1470.4,1106.8 L1469.5,1106.7 L1468.5,1106.4 L1467.6,1105.9 L1466.9,1105.2 L1466.2,1104.2 L1465.8,1102.9 L1465.7,1101.1 L1464.8,1101.7 L1463.5,1102.5 L1462.3,1102.9 L1461.2,1103.0 L1460.1,1102.8 L1459.2,1102.5 L1458.4,1101.9 L1457.8,1101.1 L1457.4,1100.3 L1457.1,1099.3 L1457.1,1098.3 L1457.4,1097.2 L1457.9,1096.2 L1458.8,1095.2 L1460.4,1094.2 L1459.4,1093.7 L1458.0,1093.0 L1457.1,1092.2 L1456.4,1091.2 L1456.1,1090.2 L1455.9,1089.2 L1456.0,1088.3 L1456.3,1087.4 L1456.9,1086.6 L1457.6,1085.9 L1458.5,1085.4 L1459.5,1085.1 L1460.7,1085.0 L1462.0,1085.3 L1463.6,1086.1 L1463.6,1085.0 L1463.5,1083.5 L1463.8,1082.3 L1464.2,1081.2 L1464.9,1080.4 L1465.7,1079.8 L1466.6,1079.4 L1467.6,1079.2 L1468.5,1079.3 L1469.5,1079.6 L1470.4,1080.1 L1471.1,1080.8 L1471.8,1081.8 L1472.2,1083.1 L1472.3,1084.9 L1473.2,1084.3 L1474.5,1083.5 L1475.7,1083.1 L1476.8,1083.0 L1477.9,1083.2 L1478.8,1083.5 L1479.6,1084.1 L1480.2,1084.9 L1480.6,1085.7 L1480.9,1086.7 L1480.9,1087.7 L1480.6,1088.8 L1480.1,1089.8 L1479.2,1090.8 L1477.6,1091.8 L1478.6,1092.3 Z" fill="#ebebeb" stroke="#111" stroke-width="2.3"/>
<path d="M1445.0,1125.0 L1447.0,1125.8 L1448.2,1126.7 L1449.0,1127.8 L1449.4,1128.8 L1449.5,1129.9 L1449.3,1130.9 L1448.8,1131.8 L1448.0,1132.5 L1447.0,1133.0 L1445.8,1133.2 L1444.4,1133.2 L1442.8,1132.6 L1441.8,1132.4 L1442.3,1134.3 L1442.2,1135.8 L1441.9,1137.0 L1441.2,1138.0 L1440.4,1138.7 L1439.5,1139.1 L1438.5,1139.2 L1437.5,1139.0 L1436.5,1138.5 L1435.6,1137.7 L1434.8,1136.5 L1434.3,1134.7 L1433.6,1134.5 L1432.5,1135.9 L1431.3,1136.7 L1430.1,1137.1 L1429.0,1137.2 L1427.9,1136.9 L1427.1,1136.4 L1426.4,1135.7 L1425.9,1134.7 L1425.7,1133.6 L1425.8,1132.4 L1426.4,1131.0 L1427.5,1129.5 L1426.8,1129.1 L1425.0,1129.0 L1423.7,1128.5 L1422.7,1127.8 L1422.0,1127.0 L1421.6,1126.0 L1421.5,1125.0 L1421.7,1124.0 L1422.2,1123.1 L1423.0,1122.2 L1424.1,1121.6 L1425.5,1121.2 L1427.6,1121.3 L1426.9,1120.1 L1426.0,1118.7 L1425.6,1117.4 L1425.5,1116.2 L1425.8,1115.1 L1426.3,1114.2 L1427.1,1113.6 L1428.0,1113.1 L1429.1,1113.0 L1430.2,1113.1 L1431.4,1113.6 L1432.6,1114.6 L1433.9,1116.6 L1434.2,1114.6 L1434.7,1113.0 L1435.5,1112.0 L1436.5,1111.2 L1437.5,1110.8 L1438.5,1110.7 L1439.5,1110.9 L1440.4,1111.4 L1441.2,1112.2 L1441.7,1113.2 L1442.0,1114.5 L1442.0,1116.1 L1441.2,1118.4 L1443.3,1116.9 L1444.8,1116.5 L1446.1,1116.5 L1447.2,1116.9 L1448.1,1117.4 L1448.8,1118.2 L1449.2,1119.1 L1449.4,1120.1 L1449.2,1121.2 L1448.7,1122.3 L1447.8,1123.3 L1446.4,1124.3 Z" fill="#ebebeb" stroke="#111" stroke-width="2.3"/>
<path d="M1468.7,1116.0 L1469.9,1116.8 L1470.7,1117.8 L1471.2,1118.8 L1471.5,1119.9 L1471.5,1120.9 L1471.3,1121.9 L1470.8,1122.8 L1470.1,1123.6 L1469.3,1124.2 L1468.2,1124.6 L1467.1,1124.8 L1465.8,1124.7 L1464.4,1124.1 L1462.9,1123.2 L1463.4,1125.3 L1463.2,1126.7 L1462.8,1127.9 L1462.2,1128.9 L1461.4,1129.6 L1460.5,1130.1 L1459.5,1130.4 L1458.5,1130.5 L1457.5,1130.3 L1456.5,1129.8 L1455.7,1129.2 L1454.9,1128.3 L1454.4,1127.1 L1454.1,1125.6 L1454.2,1123.8 L1452.6,1125.3 L1451.3,1125.9 L1450.1,1126.1 L1448.9,1126.1 L1447.9,1125.7 L1447.0,1125.2 L1446.3,1124.5 L1445.7,1123.7 L1445.4,1122.7 L1445.3,1121.7 L1445.4,1120.6 L1445.9,1119.5 L1446.6,1118.4 L1447.8,1117.4 L1449.3,1116.6 L1447.3,1116.0 L1446.1,1115.2 L1445.3,1114.2 L1444.8,1113.2 L1444.5,1112.1 L1444.5,1111.1 L1444.7,1110.1 L1445.2,1109.2 L1445.9,1108.4 L1446.7,1107.8 L1447.8,1107.4 L1448.9,1107.2 L1450.2,1107.3 L1451.6,1107.9 L1453.1,1108.8 L1452.6,1106.7 L1452.8,1105.3 L1453.2,1104.1 L1453.8,1103.1 L1454.6,1102.4 L1455.5,1101.9 L1456.5,1101.6 L1457.5,1101.5 L1458.5,1101.7 L1459.5,1102.2 L1460.3,1102.8 L1461.1,1103.7 L1461.6,1104.9 L1461.9,1106.4 L1461.8,1108.2 L1463.4,1106.7 L1464.7,1106.1 L1465.9,1105.9 L1467.1,1105.9 L1468.1,1106.3 L1469.0,1106.8 L1469.7,1107.5 L1470.3,1108.3 L1470.6,1109.3 L1470.7,1110.3 L1470.6,1111.4 L1470.1,1112.5 L1469.4,1113.6 L1468.2,1114.6 L1466.7,1115.4 Z" fill="#ebebeb" stroke="#111" stroke-width="2.3"/>
<path d="M1491.7,1108.0 L1490.3,1108.7 L1489.4,1109.2 L1491.0,1110.1 L1491.9,1111.1 L1492.4,1112.2 L1492.6,1113.2 L1492.5,1114.1 L1492.2,1115.0 L1491.6,1115.7 L1490.8,1116.2 L1489.9,1116.6 L1488.7,1116.6 L1487.5,1116.3 L1486.1,1115.5 L1485.4,1115.6 L1485.6,1117.3 L1485.3,1118.6 L1484.8,1119.6 L1484.1,1120.4 L1483.3,1120.9 L1482.4,1121.1 L1481.5,1121.1 L1480.6,1120.8 L1479.7,1120.2 L1479.0,1119.3 L1478.5,1118.1 L1478.3,1116.4 L1477.6,1116.4 L1476.4,1117.5 L1475.2,1118.0 L1474.1,1118.2 L1473.1,1118.1 L1472.2,1117.8 L1471.5,1117.2 L1471.0,1116.4 L1470.7,1115.5 L1470.7,1114.4 L1471.0,1113.3 L1471.7,1112.1 L1473.1,1110.9 L1472.0,1110.6 L1470.5,1110.2 L1469.4,1109.6 L1468.6,1108.9 L1468.1,1108.0 L1467.9,1107.1 L1467.9,1106.2 L1468.3,1105.3 L1468.9,1104.5 L1469.7,1103.9 L1470.8,1103.5 L1472.2,1103.3 L1474.2,1103.7 L1473.3,1102.4 L1472.7,1101.0 L1472.5,1099.8 L1472.6,1098.7 L1473.0,1097.8 L1473.6,1097.1 L1474.4,1096.6 L1475.3,1096.3 L1476.3,1096.3 L1477.3,1096.7 L1478.3,1097.3 L1479.3,1098.4 L1480.2,1100.7 L1480.7,1098.2 L1481.4,1097.0 L1482.2,1096.1 L1483.2,1095.6 L1484.1,1095.4 L1485.1,1095.5 L1485.9,1095.8 L1486.7,1096.4 L1487.2,1097.2 L1487.6,1098.2 L1487.7,1099.4 L1487.4,1100.9 L1486.8,1102.4 L1488.7,1101.6 L1490.0,1101.4 L1491.2,1101.6 L1492.2,1102.1 L1492.9,1102.7 L1493.4,1103.5 L1493.6,1104.4 L1493.6,1105.3 L1493.3,1106.3 L1492.7,1107.2 Z" fill="#ebebeb" stroke="#111" stroke-width="2.3"/>
<path d="M1486.8,1130.0 L1487.6,1130.8 L1488.2,1131.7 L1488.5,1132.6 L1488.5,1133.6 L1488.4,1134.5 L1488.0,1135.4 L1487.5,1136.1 L1486.7,1136.7 L1485.9,1137.2 L1484.8,1137.4 L1483.6,1137.4 L1482.3,1137.0 L1480.8,1136.2 L1481.4,1138.0 L1481.4,1139.4 L1481.1,1140.5 L1480.6,1141.4 L1479.9,1142.1 L1479.2,1142.7 L1478.3,1143.0 L1477.4,1143.1 L1476.5,1143.0 L1475.6,1142.7 L1474.7,1142.1 L1474.0,1141.3 L1473.4,1140.3 L1473.1,1139.0 L1473.1,1137.3 L1471.7,1138.7 L1470.6,1139.4 L1469.5,1139.7 L1468.4,1139.7 L1467.5,1139.5 L1466.6,1139.1 L1465.9,1138.5 L1465.3,1137.7 L1465.0,1136.9 L1464.8,1135.9 L1464.9,1135.0 L1465.2,1133.9 L1465.8,1132.9 L1466.8,1132.0 L1468.3,1131.1 L1466.3,1130.7 L1465.2,1130.0 L1464.4,1129.2 L1463.8,1128.3 L1463.5,1127.4 L1463.5,1126.4 L1463.6,1125.5 L1464.0,1124.6 L1464.5,1123.9 L1465.3,1123.3 L1466.1,1122.8 L1467.2,1122.6 L1468.4,1122.6 L1469.7,1123.0 L1471.2,1123.8 L1470.6,1122.0 L1470.6,1120.6 L1470.9,1119.5 L1471.4,1118.6 L1472.1,1117.9 L1472.8,1117.3 L1473.7,1117.0 L1474.6,1116.9 L1475.5,1117.0 L1476.4,1117.3 L1477.3,1117.9 L1478.0,1118.7 L1478.6,1119.7 L1478.9,1121.0 L1478.9,1122.7 L1480.3,1121.3 L1481.4,1120.6 L1482.5,1120.3 L1483.6,1120.3 L1484.5,1120.5 L1485.4,1120.9 L1486.1,1121.5 L1486.7,1122.3 L1487.0,1123.1 L1487.2,1124.1 L1487.1,1125.0 L1486.8,1126.1 L1486.2,1127.1 L1485.2,1128.0 L1483.7,1128.9 L1485.7,1129.3 Z" fill="#ebebeb" stroke="#111" stroke-width="2.3"/>
<path d="M1465.2,1138.0 L1465.9,1138.8 L1466.3,1139.6 L1466.5,1140.4 L1466.4,1141.3 L1466.1,1142.0 L1465.5,1142.7 L1464.8,1143.2 L1463.8,1143.5 L1462.6,1143.6 L1461.2,1143.2 L1460.8,1143.6 L1461.3,1145.0 L1461.4,1146.2 L1461.2,1147.1 L1460.8,1148.0 L1460.2,1148.6 L1459.5,1149.0 L1458.6,1149.2 L1457.8,1149.1 L1456.9,1148.8 L1456.1,1148.2 L1455.3,1147.3 L1454.7,1145.8 L1454.1,1146.2 L1453.3,1147.4 L1452.5,1148.1 L1451.6,1148.6 L1450.7,1148.7 L1449.8,1148.6 L1449.1,1148.3 L1448.4,1147.7 L1448.0,1147.0 L1447.7,1146.1 L1447.7,1145.0 L1448.0,1143.9 L1448.9,1142.4 L1447.8,1142.5 L1446.4,1142.6 L1445.3,1142.3 L1444.5,1141.8 L1443.8,1141.2 L1443.4,1140.5 L1443.2,1139.7 L1443.3,1138.8 L1443.6,1138.0 L1444.2,1137.2 L1445.1,1136.6 L1446.3,1136.1 L1448.2,1136.0 L1446.8,1135.0 L1446.0,1134.0 L1445.6,1133.0 L1445.4,1132.0 L1445.6,1131.1 L1445.9,1130.4 L1446.5,1129.8 L1447.2,1129.3 L1448.0,1129.1 L1449.0,1129.1 L1450.1,1129.4 L1451.2,1130.1 L1452.4,1131.6 L1452.3,1129.6 L1452.6,1128.3 L1453.1,1127.4 L1453.8,1126.7 L1454.6,1126.3 L1455.4,1126.1 L1456.2,1126.2 L1457.0,1126.5 L1457.7,1127.1 L1458.3,1127.9 L1458.7,1129.0 L1458.7,1130.3 L1458.7,1131.6 L1460.1,1130.5 L1461.2,1130.0 L1462.3,1129.9 L1463.2,1130.1 L1464.0,1130.5 L1464.6,1131.0 L1465.0,1131.7 L1465.2,1132.6 L1465.2,1133.5 L1464.9,1134.4 L1464.2,1135.4 L1463.1,1136.3 L1462.6,1136.9 L1464.2,1137.4 Z" fill="#ebebeb" stroke="#111" stroke-width="2.3"/>
<path d="M1431.7,1131.0 L1431.1,1131.5 L1430.2,1131.9 L1429.6,1132.2 L1430.5,1132.9 L1431.0,1133.5 L1431.3,1134.2 L1431.4,1134.9 L1431.4,1135.6 L1431.2,1136.3 L1431.0,1136.9 L1430.6,1137.4 L1430.2,1137.9 L1429.7,1138.2 L1429.1,1138.5 L1428.4,1138.6 L1427.7,1138.7 L1427.1,1138.6 L1426.4,1138.3 L1425.7,1137.9 L1425.1,1137.2 L1424.6,1136.7 L1424.2,1137.8 L1423.7,1138.4 L1423.2,1138.9 L1422.5,1139.3 L1421.9,1139.4 L1421.2,1139.5 L1420.6,1139.5 L1420.0,1139.3 L1419.4,1139.0 L1418.9,1138.6 L1418.4,1138.1 L1418.1,1137.6 L1417.9,1136.9 L1417.8,1136.2 L1417.8,1135.5 L1418.0,1134.8 L1418.5,1133.9 L1418.7,1133.3 L1417.6,1133.3 L1416.9,1133.0 L1416.2,1132.7 L1415.7,1132.2 L1415.3,1131.6 L1415.0,1131.0 L1414.9,1130.4 L1414.9,1129.7 L1415.0,1129.1 L1415.2,1128.5 L1415.5,1127.9 L1415.9,1127.4 L1416.5,1127.0 L1417.1,1126.7 L1417.8,1126.5 L1418.6,1126.4 L1419.5,1126.6 L1420.1,1126.7 L1419.8,1125.7 L1419.8,1124.8 L1420.0,1124.1 L1420.3,1123.5 L1420.7,1122.9 L1421.2,1122.5 L1421.8,1122.1 L1422.4,1121.9 L1423.0,1121.8 L1423.7,1121.8 L1424.3,1122.0 L1424.9,1122.2 L1425.5,1122.6 L1426.0,1123.1 L1426.4,1123.7 L1426.7,1124.4 L1426.8,1125.4 L1426.9,1126.0 L1427.8,1125.4 L1428.6,1125.1 L1429.3,1125.1 L1430.0,1125.2 L1430.7,1125.4 L1431.2,1125.7 L1431.7,1126.2 L1432.1,1126.7 L1432.4,1127.2 L1432.6,1127.9 L1432.7,1128.5 L1432.6,1129.2 L1432.5,1129.8 L1432.1,1130.4 Z" fill="#ebebeb" stroke="#111" stroke-width="2.3"/>
<ellipse cx="1476" cy="1080" rx="3.5" ry="2" fill="#111"/>
<ellipse cx="1440" cy="1112" rx="2.5" ry="2" fill="#111"/>
<ellipse cx="1462" cy="1104" rx="2" ry="3" fill="#111"/>
<ellipse cx="1447" cy="1131" rx="2" ry="3" fill="#111"/>
<text x="974.3" y="534" font-size="20.6" fill="#606060" stroke="#606060" stroke-width="0.3" textLength="48.3" lengthAdjust="spacingAndGlyphs">285.0</text>
<text x="974.3" y="741.2" font-size="20.6" fill="#606060" stroke="#606060" stroke-width="0.3" textLength="48.3" lengthAdjust="spacingAndGlyphs">285.0</text>
<text x="804.9" y="638" font-size="20.6" fill="#606060" stroke="#606060" stroke-width="0.3" textLength="48.3" lengthAdjust="spacingAndGlyphs">185.0</text>
<text x="1145.9" y="597.5" font-size="20.6" fill="#606060" stroke="#606060" stroke-width="0.3" textLength="48.3" lengthAdjust="spacingAndGlyphs">125.0</text>
<text x="1150.7" y="722" font-size="20.6" fill="#606060" stroke="#606060" stroke-width="0.3" textLength="37.6" lengthAdjust="spacingAndGlyphs">60.0</text>
<text x="1212.2" y="732.2" font-size="20.6" fill="#606060" stroke="#606060" stroke-width="0.3" textLength="37.6" lengthAdjust="spacingAndGlyphs">60.0</text>
<text x="1443.9" y="712" font-size="20.6" fill="#606060" stroke="#606060" stroke-width="0.3" textLength="48.3" lengthAdjust="spacingAndGlyphs">384.0</text>
<text x="969.3" y="803" font-size="20.6" fill="#606060" stroke="#606060" stroke-width="0.3" textLength="48.3" lengthAdjust="spacingAndGlyphs">292.6</text>
<text x="616.9" y="802.5" font-size="20.6" fill="#606060" stroke="#606060" stroke-width="0.3" textLength="48.3" lengthAdjust="spacingAndGlyphs">232.2</text>
<text x="481.9" y="934" font-size="20.6" fill="#606060" stroke="#606060" stroke-width="0.3" textLength="48.3" lengthAdjust="spacingAndGlyphs">225.0</text>
<text x="638.9" y="1064" font-size="20.6" fill="#606060" stroke="#606060" stroke-width="0.3" textLength="48.3" lengthAdjust="spacingAndGlyphs">265.0</text>
<text x="628.9" y="1125.3" font-size="20.6" fill="#606060" stroke="#606060" stroke-width="0.3" textLength="48.3" lengthAdjust="spacingAndGlyphs">249.8</text>
<text x="1208.9" y="863" font-size="20.6" fill="#606060" stroke="#606060" stroke-width="0.3" textLength="48.3" lengthAdjust="spacingAndGlyphs">135.0</text>
<text x="999" y="626.5" text-anchor="middle" font-size="31" fill="#1c1c1c">Hallway</text>
<text x="999.4" y="657.5" text-anchor="middle" font-size="27.5" fill="#1c1c1c">5.27 m²</text>
<path fill-rule="evenodd" fill="rgb(232,87,74)" fill-opacity="0.3" d="M456,1140 V748.2 H784.6 V483.2 H1210.2 V661.3 H1490 V1140 Z M813,513.7 H1180.5 V748.6 H813 Z M486,777.3 H1181.3 V947 H1210.2 V692.2 H1490 V1140 H846.6 V1072 H486 Z M486,1103.7 H815.2 V1140 H486 Z"/>
<rect x="1316.5" y="661.3" width="180" height="30" fill="#fff"/>
<rect x="922.6" y="483.2" width="118.4" height="30.5" fill="#fff"/>
<rect x="922.6" y="748.8" width="118.8" height="28.2" fill="#fff"/>
<path d="M787,485.5 H922.6 V507 H807.4 V755.5 H922.6 V777 H486 V1077.4 H841.5 V1140 H821.3 V1099 H486 V1140 H464.7 V755.5 H787 Z" fill="#bb9691" stroke="#5f3d39" stroke-width="2.2"/>
<path d="M1041,485.5 H1211 V661.3 H1315.5 V685.2 H1211 V947 H1189.8 V777 H1041.9 V755.5 H1189.8 V507 H1041 Z" fill="#bb9691" stroke="#5f3d39" stroke-width="2.2"/>
<circle cx="797" cy="496" r="9" fill="#b08a85" opacity="0.45"/>
<circle cx="1200" cy="496" r="9" fill="#b08a85" opacity="0.45"/>
<circle cx="1200" cy="671" r="9" fill="#b08a85" opacity="0.45"/>
<circle cx="1200" cy="766" r="9" fill="#b08a85" opacity="0.45"/>
<circle cx="797" cy="766" r="9" fill="#b08a85" opacity="0.45"/>
<circle cx="475" cy="766" r="9" fill="#b08a85" opacity="0.45"/>
<circle cx="475" cy="1088" r="9" fill="#b08a85" opacity="0.45"/>
<circle cx="831" cy="1088" r="9" fill="#b08a85" opacity="0.45"/>
<circle cx="1200" cy="947" r="9" fill="#b08a85" opacity="0.45"/>
<g stroke-width="1.5" fill="none"><line x1="1321" y1="663.2" x2="1490" y2="663.2" stroke="#333"/><line x1="1321" y1="684.5" x2="1490" y2="684.5" stroke="#333"/><line x1="1315.5" y1="671.3" x2="1490" y2="671.3" stroke="#ea5c4f"/><line x1="1315.5" y1="681.7" x2="1490" y2="681.7" stroke="#ea5c4f"/><line x1="1321" y1="678.2" x2="1490" y2="678.2" stroke="#999"/></g>
<rect x="1316" y="663" width="5" height="21.5" fill="#8a8a8a" stroke="#444" stroke-width="0.8"/>
<g fill="none" stroke="#ea5c4f" stroke-width="1.8"><path d="M456,1140 V748.2 H784.6 V483.2 H1210.2 V661.3 H1490"/><rect x="813" y="513.7" width="367.5" height="234.9"/><path d="M486,1140 V777.3 H1181.3 V947 H1210.2 V692.2 H1490"/><path d="M486,1072 H846.6 V1140"/><path d="M486,1103.7 H815.2 V1140"/><path d="M922.6,483.2 V513.7 M1041,483.2 V513.7 M922.6,493.6 H1041 M922.6,503.6 H1041"/><path d="M922.6,748.8 V880.7 M1041.4,748.8 V777 M922.6,758.4 H1041.4 M922.6,768.3 H1041.4"/></g>
<rect x="922" y="380" width="9.7" height="115" fill="#fff" stroke="#8a8a8a" stroke-width="1.3"/>
<line x1="923.3" y1="390" x2="923.3" y2="513.7" stroke="#ea5c4f" stroke-width="1.8"/>
<path d="M1044.5,483 A119,119 0 0 0 926,378" fill="none" stroke="#dcdcdc" stroke-width="1.2"/>
<path d="M1041,483.2 A116,116 0 0 0 926,381" fill="none" stroke="#ea5c4f" stroke-width="1.8"/>
<rect x="924.8" y="766.6" width="10.6" height="118" fill="#fff" stroke="#777" stroke-width="1.3"/>
<path d="M1045,770 A121,121 0 0 1 935,886" fill="none" stroke="#dcdcdc" stroke-width="1.2"/>
<path d="M1040.5,770 A117.5,117.5 0 0 1 922.6,880.7" fill="none" stroke="#ea5c4f" stroke-width="1.8"/>
<g stroke="#6e6e6e" stroke-width="1.2" fill="none"><line x1="807.4" y1="527.3" x2="973.8" y2="527.3"/><line x1="1027.5" y1="527.3" x2="1189.8" y2="527.3"/><line x1="802.1" y1="532.6" x2="812.7" y2="522.0"/><line x1="1184.5" y1="532.6" x2="1195.1" y2="522.0"/><line x1="807.4" y1="734.5" x2="973.8" y2="734.5"/><line x1="1027.5" y1="734.5" x2="1189.8" y2="734.5"/><line x1="802.1" y1="739.8" x2="812.7" y2="729.2"/><line x1="1184.5" y1="739.8" x2="1195.1" y2="729.2"/><line x1="828.6" y1="507" x2="828.6" y2="620"/><line x1="828.6" y1="642" x2="828.6" y2="755.5"/><line x1="823.3" y1="501.7" x2="833.9" y2="512.3"/><line x1="823.3" y1="750.2" x2="833.9" y2="760.8"/><line x1="1169.5" y1="507" x2="1169.5" y2="579"/><line x1="1169.5" y1="602" x2="1169.5" y2="704"/><line x1="1169.5" y1="727" x2="1169.5" y2="755.5"/><line x1="1164.2" y1="501.7" x2="1174.8" y2="512.3"/><line x1="1164.2" y1="750.2" x2="1174.8" y2="760.8"/><line x1="846" y1="796.3" x2="968.8" y2="796.3"/><line x1="1022.5" y1="796.3" x2="1189.8" y2="796.3"/><line x1="1184.5" y1="801.6" x2="1195.1" y2="791.0"/><line x1="797" y1="788" x2="797" y2="804"/><line x1="791.7" y1="801.6" x2="802.3" y2="791.0"/><line x1="505.5" y1="777" x2="505.5" y2="916"/><line x1="505.5" y1="938" x2="505.5" y2="1077.4"/><line x1="500.2" y1="771.7" x2="510.8" y2="782.3"/><line x1="500.2" y1="1072.1" x2="510.8" y2="1082.7"/><line x1="486" y1="1057.8" x2="638.4" y2="1057.8"/><line x1="692.1" y1="1057.8" x2="846.6" y2="1057.8"/><line x1="480.7" y1="1063.1" x2="491.3" y2="1052.5"/><line x1="841.3" y1="1063.1" x2="851.9" y2="1052.5"/><line x1="505.6" y1="1099" x2="505.6" y2="1140"/><line x1="500.3" y1="1093.7" x2="510.9" y2="1104.3"/><line x1="500.3" y1="1134.7" x2="510.9" y2="1145.3"/><line x1="486" y1="1118.5" x2="628.4" y2="1118.5"/><line x1="682.1" y1="1118.5" x2="821.3" y2="1118.5"/><line x1="480.7" y1="1123.8" x2="491.3" y2="1113.2"/><line x1="816.0" y1="1123.8" x2="826.6" y2="1113.2"/><line x1="861.7" y1="1077.4" x2="861.7" y2="1140"/><line x1="1210.2" y1="705.6" x2="1443.4" y2="705.6"/><line x1="1497.1" y1="705.6" x2="1490" y2="705.6"/><line x1="1204.9" y1="710.9" x2="1215.5" y2="700.3"/><line x1="1484.7" y1="710.9" x2="1495.3" y2="700.3"/><line x1="1231.6" y1="692.2" x2="1231.6" y2="714"/><line x1="1231.6" y1="737" x2="1231.6" y2="845"/><line x1="1231.6" y1="867" x2="1231.6" y2="947.2"/><line x1="1226.3" y1="686.9" x2="1236.9" y2="697.5"/><line x1="1226.3" y1="941.9" x2="1236.9" y2="952.5"/><line x1="1161" y1="675" x2="1178" y2="675"/><line x1="1164.2" y1="669.7" x2="1174.8" y2="680.3"/><line x1="1223" y1="765.5" x2="1240" y2="765.5"/><line x1="1226.3" y1="760.2" x2="1236.9" y2="770.8"/><line x1="1223" y1="947.2" x2="1240" y2="947.2"/><line x1="853" y1="1077.4" x2="870" y2="1077.4"/><line x1="856.4" y1="1072.1" x2="867.0" y2="1082.7"/></g>
</g>
</svg>
</body></html>
